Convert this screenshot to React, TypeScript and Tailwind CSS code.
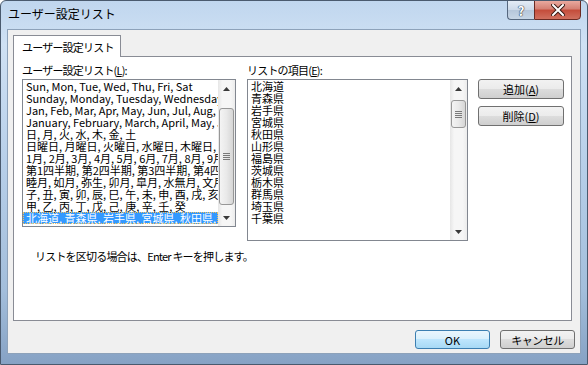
import React from 'react';

const leftItems = [
  'Sun, Mon, Tue, Wed, Thu, Fri, Sat',
  'Sunday, Monday, Tuesday, Wednesday, Thursday, Friday, Saturday',
  'Jan, Feb, Mar, Apr, May, Jun, Jul, Aug, Sep, Oct, Nov, Dec',
  'January, February, March, April, May, June, July, August',
  '日, 月, 火, 水, 木, 金, 土',
  '日曜日, 月曜日, 火曜日, 水曜日, 木曜日, 金曜日, 土曜日',
  '1月, 2月, 3月, 4月, 5月, 6月, 7月, 8月, 9月, 10月, 11月, 12月',
  '第1四半期, 第2四半期, 第3四半期, 第4四半期',
  '睦月, 如月, 弥生, 卯月, 皐月, 水無月, 文月, 葉月, 長月, 神無月',
  '子, 丑, 寅, 卯, 辰, 巳, 午, 未, 申, 酉, 戌, 亥',
  '甲, 乙, 丙, 丁, 戊, 己, 庚, 辛, 壬, 癸',
  '北海道, 青森県, 岩手県, 宮城県, 秋田県, 山形県, 福島県',
];

const rightItems = [
  '北海道', '青森県', '岩手県', '宮城県', '秋田県', '山形県',
  '福島県', '茨城県', '栃木県', '群馬県', '埼玉県', '千葉県',
];

const ArrowUp = () => (
  <svg width="7" height="4" viewBox="0 0 7 4">
    <polygon points="3.5,0 7,4 0,4" fill="#3a3a3a" />
  </svg>
);

const ArrowDown = () => (
  <svg width="7" height="4" viewBox="0 0 7 4">
    <polygon points="0,0 7,0 3.5,4" fill="#3a3a3a" />
  </svg>
);

// vertical scrollbar, Win7 style
const ScrollBar: React.FC<{ thumbTop: number; thumbHeight: number }> = ({ thumbTop, thumbHeight }) => (
  <div className="w-[17px] flex flex-col bg-[linear-gradient(to_right,#e6e6e6,#f6f6f6_25%,#f6f6f6_75%,#ececec)]">
    <div className="h-[17px] flex items-center justify-center">
      <ArrowUp />
    </div>
    <div
      className="mx-[1px] rounded-[3px] border border-[#979797] bg-[linear-gradient(to_right,#f4f4f4,#e9e9e9_50%,#d6d6d6)] flex flex-col items-center justify-center gap-[1px]"
      style={{ marginTop: thumbTop, height: thumbHeight }}
    >
      <div className="w-[7px] h-[1px] bg-[#7a7a7a]" />
      <div className="w-[7px] h-[1px] bg-[#7a7a7a]" />
      <div className="w-[7px] h-[1px] bg-[#7a7a7a]" />
      <div className="w-[7px] h-[1px] bg-[#7a7a7a]" />
    </div>
    <div className="flex-1" />
    <div className="h-[17px] flex items-center justify-center">
      <ArrowDown />
    </div>
  </div>
);

const Btn: React.FC<{ children: React.ReactNode; primary?: boolean; className?: string }> = ({ children, primary, className }) => (
  <div
    className={
      'flex items-center justify-center rounded-[3px] border text-[11px] leading-[12px] text-black whitespace-nowrap ' +
      (primary
        ? 'border-[#3c7fb1] bg-[linear-gradient(to_bottom,#eaf6fd_0%,#d9f0fc_50%,#bee6fd_50%,#a7d9f5_100%)] '
        : 'border-[#707070] bg-[linear-gradient(to_bottom,#f2f2f2_0%,#ebebeb_50%,#dddddd_50%,#cfcfcf_100%)] ') +
      (className ?? '')
    }
  >
    {children}
  </div>
);

const App: React.FC = () => {
  return (
    <div className="w-[588px] h-[365px] flex flex-col rounded-t-[6px] border border-[#4a5a6e] overflow-hidden font-['Noto_Sans_CJK_JP',sans-serif] bg-[linear-gradient(to_bottom,#c0d6ee_0%,#cfe1f4_12%,#b7cfe9_45%,#a3bedb_80%,#86a2c4_100%)]">
      {/* Title bar */}
      <div className="h-[28px] flex justify-between items-start">
        <div className="pl-[7px] pt-[6px] text-[12px] leading-[14px] text-black whitespace-nowrap">ユーザー設定リスト</div>
        <div className="flex mr-[6px] -mt-px">
          <div className="w-[27px] h-[20px] rounded-bl-[4px] border border-[#55677e] border-r-0 bg-[linear-gradient(to_bottom,#e4ecf6_0%,#ccd9e8_50%,#b5c6da_50%,#c7d6e6_100%)] flex items-center justify-center text-[13px] font-bold leading-none text-white [text-shadow:0_0_1px_#2b3a4c,0_0_1px_#2b3a4c,0_0_1px_#2b3a4c]">
            ?
          </div>
          <div className="w-[47px] h-[20px] rounded-br-[4px] border border-[#6b2a22] bg-[linear-gradient(to_bottom,#e9a99f_0%,#d47f72_45%,#c44c3a_50%,#d0705f_100%)] flex items-center justify-center">
            <svg width="14" height="12" viewBox="0 0 14 12">
              <path d="M2 1 L12 11 M12 1 L2 11" stroke="#3b1a14" strokeWidth="4" strokeLinecap="square" />
              <path d="M2 1 L12 11 M12 1 L2 11" stroke="#ffffff" strokeWidth="2" strokeLinecap="square" />
            </svg>
          </div>
        </div>
      </div>

      {/* Frame body */}
      <div className="flex-1 px-[6px] pb-[10px]">
        <div className="h-full bg-[#f0f0f0] border border-[#8da2ba] pl-[5px] pt-[5px] flex flex-col">
          {/* Tab header */}
          <div className="flex">
            <div className="relative z-10 -mb-px w-[108px] h-[22px] border border-b-0 border-[#898c95] bg-white flex items-center pl-[8px] text-[11px] leading-[12px] tracking-[-0.8px] whitespace-nowrap text-black">
              ユーザー設定リスト
            </div>
          </div>

          {/* Tab page */}
          <div className="w-[559px] h-[265px] border border-[#898c95] bg-white pl-[8px] pt-[6px] flex flex-col text-[11px] text-black">
            <div className="flex">
              {/* Left list */}
              <div className="w-[214px] flex flex-col">
                <div className="h-[14px] leading-[14px] mb-[2px] tracking-[-0.8px] whitespace-nowrap">
                  ユーザー設定リスト(<span className="underline">L</span>):
                </div>
                <div className="h-[148px] border border-[#828790] flex">
                  <div className="flex-1 overflow-hidden">
                    {leftItems.map((item, i) => (
                      <div
                        key={i}
                        className={
                          'h-[12px] leading-[12px] px-[3px] whitespace-nowrap ' +
                          (i === leftItems.length - 1 ? 'bg-[#3399ff] text-white outline outline-1 outline-dotted outline-offset-[-1px] outline-[#f5c15a]' : '')
                        }
                      >
                        {item}
                      </div>
                    ))}
                  </div>
                  <ScrollBar thumbTop={11} thumbHeight={97} />
                </div>
              </div>

              {/* Right list */}
              <div className="w-[221px] ml-[11px] flex flex-col">
                <div className="h-[14px] leading-[14px] mb-[2px] tracking-[-0.8px] whitespace-nowrap">
                  リストの項目(<span className="underline">E</span>):
                </div>
                <div className="h-[162px] border border-[#828790] flex">
                  <div className="flex-1 overflow-hidden">
                    {rightItems.map((item) => (
                      <div key={item} className="h-[12px] leading-[12px] px-[3px] whitespace-nowrap">
                        {item}
                      </div>
                    ))}
                  </div>
                  <ScrollBar thumbTop={3} thumbHeight={28} />
                </div>
              </div>

              {/* Action buttons */}
              <div className="ml-[10px] pt-[16px] flex flex-col gap-[7px]">
                <Btn className="w-[86px] h-[20px]">
                  追加(<span className="underline">A</span>)
                </Btn>
                <Btn className="w-[86px] h-[20px]">
                  削除(<span className="underline">D</span>)
                </Btn>
              </div>
            </div>

            <div className="pl-[13px] mt-[9px] h-[12px] leading-[12px] tracking-[-0.8px] whitespace-nowrap">
              リストを区切る場合は、Enter キーを押します。
            </div>
          </div>

          {/* Dialog buttons */}
          <div className="flex justify-end gap-[10px] mt-[9px] pr-[5px]">
            <Btn primary className="w-[75px] h-[19px]">OK</Btn>
            <Btn className="w-[75px] h-[19px] tracking-[-0.5px]">キャンセル</Btn>
          </div>
        </div>
      </div>
    </div>
  );
};

export default App;
